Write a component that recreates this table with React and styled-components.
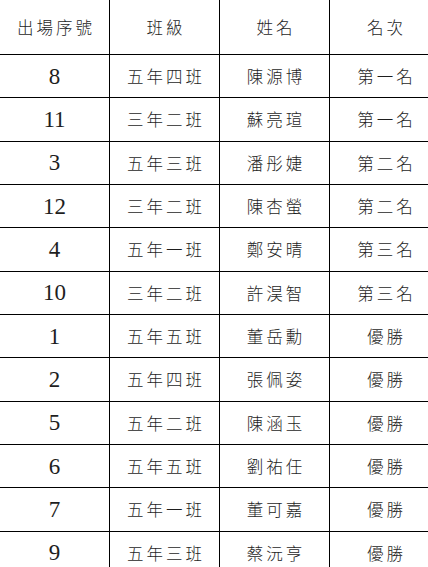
import React from "react";
import styled, { createGlobalStyle } from "styled-components";

const GlobalStyle = createGlobalStyle`
  html, body {
    margin: 0;
    padding: 0;
    background: #fff;
    overflow: hidden;
  }
`;

const Page = styled.div`
  width: 428px;
  height: 567px;
  overflow: hidden;
`;

const Table = styled.table`
  border-collapse: collapse;
  table-layout: fixed;
  width: 441px;
  margin-left: -1px;
  margin-top: -1px;
  color: #1e1e1e;
`;

const HeadRow = styled.tr`
  height: 55px;
`;

const Row = styled.tr`
  height: 43.33px;
`;

const Cell = styled.td`
  border: 1px solid #000;
  padding: 0;
  text-align: center;
  vertical-align: middle;
  font-family: ${(p) =>
    p.$num
      ? '"Liberation Serif", "Times New Roman", serif'
      : '"Noto Sans CJK TC", "Noto Sans CJK SC", sans-serif'};
  font-size: ${(p) => (p.$num ? "23px" : "16.5px")};
  letter-spacing: ${(p) => (p.$num ? "0" : "3px")};
  font-weight: ${(p) => (p.$num ? 400 : 300)};
  line-height: 1;
  padding-left: ${(p) => (p.$num ? "0" : "3px")};
`;

const HeadCell = styled(Cell).attrs({ as: "th" })`
  font-weight: 300;
`;

const results = [
  ["8", "五年四班", "陳源博", "第一名"],
  ["11", "三年二班", "蘇亮瑄", "第一名"],
  ["3", "五年三班", "潘彤婕", "第二名"],
  ["12", "三年二班", "陳杏螢", "第二名"],
  ["4", "五年一班", "鄭安晴", "第三名"],
  ["10", "三年二班", "許淏智", "第三名"],
  ["1", "五年五班", "董岳勳", "優勝"],
  ["2", "五年四班", "張佩姿", "優勝"],
  ["5", "五年二班", "陳涵玉", "優勝"],
  ["6", "五年五班", "劉祐任", "優勝"],
  ["7", "五年一班", "董可嘉", "優勝"],
  ["9", "五年三班", "蔡沅亨", "優勝"],
];

export default function App() {
  return (
    <Page>
      <GlobalStyle />
      <Table>
        <colgroup>
          <col style={{ width: "110px" }} />
          <col style={{ width: "110px" }} />
          <col style={{ width: "110px" }} />
          <col style={{ width: "111px" }} />
        </colgroup>
        <thead>
          <HeadRow>
            <HeadCell>出場序號</HeadCell>
            <HeadCell>班級</HeadCell>
            <HeadCell>姓名</HeadCell>
            <HeadCell>名次</HeadCell>
          </HeadRow>
        </thead>
        <tbody>
          {results.map((r) => (
            <Row key={r[0]}>
              <Cell $num>{r[0]}</Cell>
              <Cell>{r[1]}</Cell>
              <Cell>{r[2]}</Cell>
              <Cell>{r[3]}</Cell>
            </Row>
          ))}
        </tbody>
      </Table>
    </Page>
  );
}
